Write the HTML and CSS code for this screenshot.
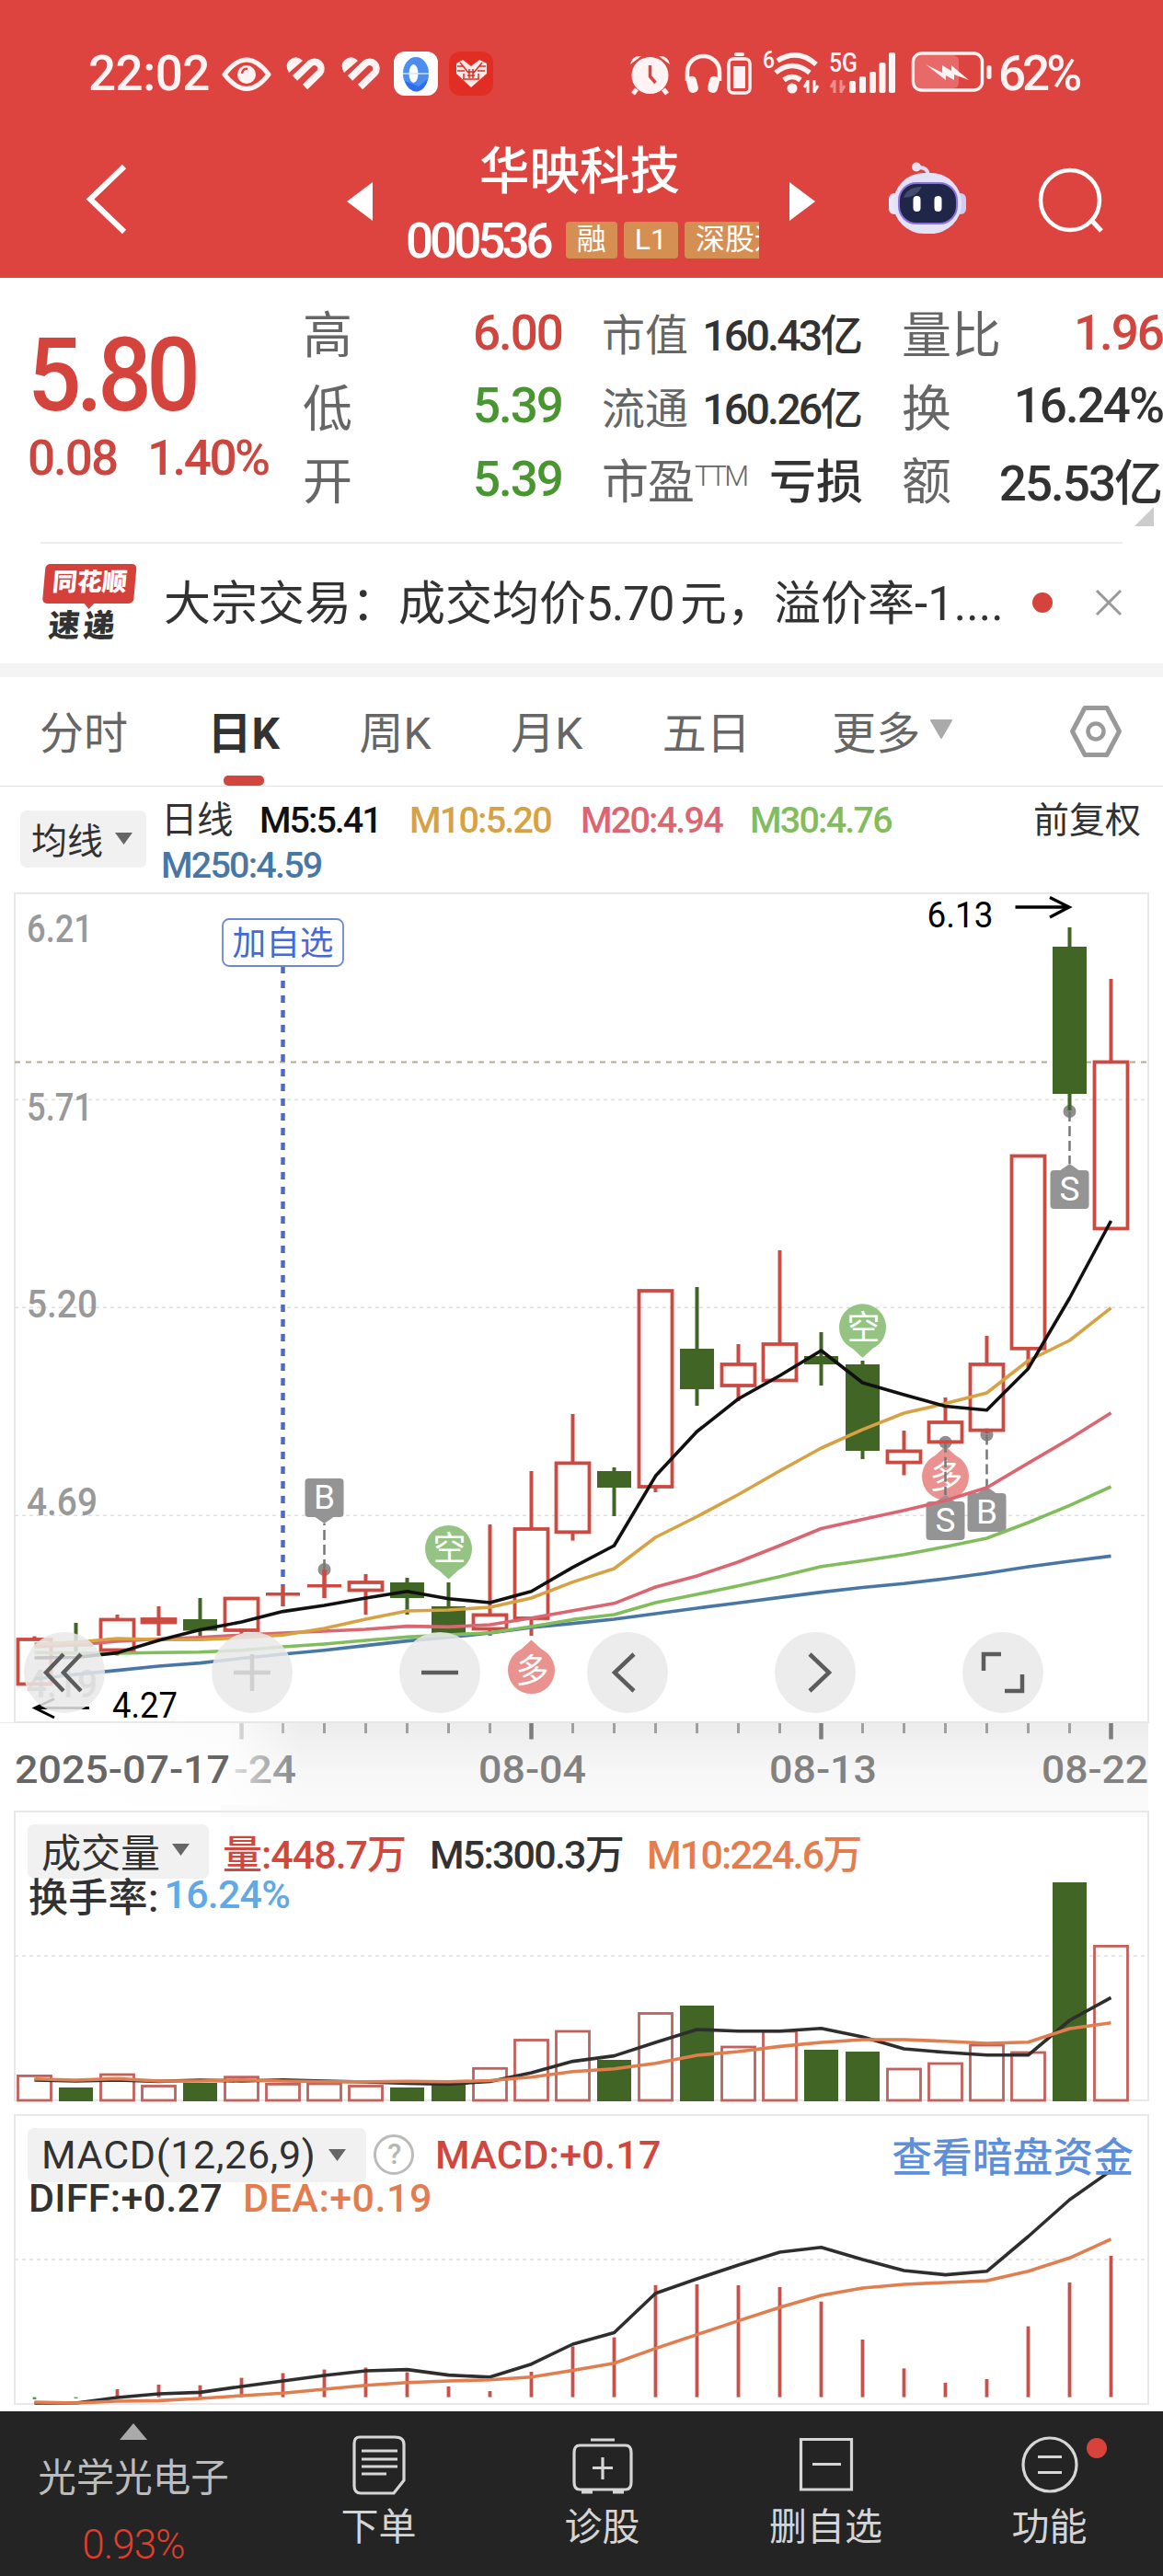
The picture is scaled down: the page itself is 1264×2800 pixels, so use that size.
FILE: index.html
```html
<!DOCTYPE html>
<html lang="zh-CN">
<head>
  <meta charset="UTF-8" />
  <meta name="viewport" content="width=device-width, initial-scale=1.0"/>
  <title>华映科技 000536</title>
  <link rel="stylesheet" href="styles.css">
</head>
<body>
  <header>
    <div class="status-bar">
      <span class="clock">22:02</span>
      <svg class="status-left" width="296" height="52" viewBox="241 54 296 52">
        <path d="M244 81 Q268 49 292 81 Q268 112 244 81Z" fill="none" stroke="#fff3f3" stroke-width="5" stroke-linejoin="round"/>
        <circle cx="268" cy="81" r="10" fill="#fff3f3"/>
        <path d="M263 80 q1 -6 6 -5" fill="none" stroke="#dd4440" stroke-width="2.5"/>
        <g id="heart">
          <path d="M314 79 Q309 70 314.500 65.500 Q322 59 329 66 Z" fill="#fff3f3"/>
          <path d="M320.500 85 L337 69 A7.300 7.300 0 0 1 347.500 79 L331.500 94.500" fill="none" stroke="#fff3f3" stroke-width="7.500"/>
        </g>
        <use href="#heart" x="60"/>
        <rect x="428" y="56" width="48" height="48" rx="12" fill="#fff"/>
        <ellipse cx="452" cy="80" rx="14" ry="18" fill="#4b8df0"/>
        <path d="M440 88 a13 17 0 0 0 25 -2 l-10 8z" fill="#2f6cf0"/>
        <ellipse cx="449.500" cy="80" rx="5" ry="10" fill="#fff"/>
        <path d="M438 80h28" stroke="#d4e4fb" stroke-width="1.500"/>
        <rect x="488" y="56" width="48" height="48" rx="12" fill="#e02e24"/>
        <path d="M512 95 L496 80 V69 L503 65 L512 72 L521 65 L529 69 V80Z" fill="#ffe9e7"/>
        <path d="M500 68l10 12M524 68l-10 12M497 77h8M519 77h8M503 86l18 0M508 78h8M508 82h8M510 75v10M514 75v10M504 80v6M520 80v6M497 72h7M521 72h7" stroke="#e02e24" stroke-width="1.500"/>
      </svg>
      <svg class="status-right" width="396" height="52" viewBox="684 54 396 52">
        <g fill="#fff3f3">
          <circle cx="706.500" cy="82" r="20"/>
          <path d="M685 70q2 -10 12 -9zM728 70q-2 -10 -12 -9z"/>
          <path d="M692 97l-4 5M721 97l4 5" stroke="#fff3f3" stroke-width="5"/>
          <path d="M706.500 71v12l6 7" fill="none" stroke="#dd4440" stroke-width="3.500"/>
          <path d="M747 88v-10a17.500 17 0 0 1 35 0v10" fill="none" stroke="#fff3f3" stroke-width="4.500"/>
          <rect x="747" y="83" width="11" height="18" rx="5" transform="rotate(-14 752 92)"/>
          <rect x="770" y="83" width="11" height="18" rx="5" transform="rotate(14 776 92)"/>
          <rect x="798" y="57" width="11" height="4" rx="2"/>
          <rect x="792" y="64" width="23" height="37" rx="5" fill="none" stroke="#fff3f3" stroke-width="3.500"/>
          <rect x="797" y="72" width="13" height="24"/>
          <text x="829" y="74" font-size="25" font-weight="500" textLength="13" lengthAdjust="spacingAndGlyphs">6</text>
          <g fill="none" stroke="#fff3f3" stroke-width="5.500">
            <path d="M845 66Q867 52 887 70M843 79Q861 64 880 79M852 87Q861 80 870 87"/>
          </g>
          <circle cx="861" cy="96" r="5.500"/>
          <path d="M878 87v14M885 87v14M878 88l-4 7M885 100l4 -7" stroke="#fff3f3" stroke-width="3"/>
          <text x="901" y="78" font-size="29" font-weight="500" textLength="31" lengthAdjust="spacingAndGlyphs">5G</text>
          <path d="M907 87v14M914 87v14M907 88l-4 7M914 100l4 -7" stroke="#ee8f8d" stroke-width="3"/>
          <rect x="923" y="88" width="7" height="13" rx="2"/>
          <rect x="934" y="83" width="7" height="18" rx="2"/>
          <rect x="945" y="78" width="7" height="23" rx="2"/>
          <rect x="955.500" y="68" width="7" height="33" rx="2"/>
          <rect x="966" y="57" width="7" height="44" rx="2"/>
          <rect x="995" y="60" width="47" height="36" rx="6" fill="#e76a68"/>
          <rect x="992.500" y="58" width="75" height="40" rx="9" fill="none" stroke="#fff3f3" stroke-width="3.500"/>
          <rect x="1072.500" y="71" width="5" height="15" rx="2.500"/>
          <path d="M1006 70l18 9v-8l10 6v-6l19 16l-16 -6v6l-9 -5v5z"/>
        </g>
      </svg>
      <span class="battery-text">62%</span>
    </div>

    <div class="nav-bar">
      <svg class="nav-back" width="50" height="84" viewBox="92 174 50 84"><path d="M135 181L98 216.500L135 252" fill="none" stroke="#fff" stroke-width="6"/></svg>
      <svg class="nav-prev" width="28" height="42"><path d="M28 0V42L0 21z" fill="#fff"/></svg>
      <div class="stock-title">
        <h1>华映科技</h1>
        <div class="stock-code">
          <span class="code">000536</span>
          <span class="tag">融</span>
          <span class="tag">L1</span>
          <span class="tag tag-cut">深股通</span>
        </div>
      </div>
      <svg class="nav-next" width="28" height="42"><path d="M0 0V42L28 21z" fill="#fff"/></svg>
      <svg class="robot" width="88" height="80" viewBox="965 176 88 80">
        <path d="M1010 190q-1 -8 -10 -8" fill="none" stroke="#dddcf5" stroke-width="4"/>
        <circle cx="997" cy="181.500" r="5" fill="#e4e2f7"/>
        <rect x="967" y="210" width="12" height="23" rx="6" fill="#e8e6f8"/>
        <rect x="1039" y="210" width="12" height="23" rx="6" fill="#cfcdf0"/>
        <rect x="972" y="188" width="74" height="66" rx="33" fill="#e3e2f6"/>
        <rect x="978" y="199" width="63" height="44" rx="19" fill="#1f2647" stroke="#8a6fe0" stroke-width="2"/>
        <path d="M983 215q4 -12 20 -12q-5 11 -20 12z" fill="#454c6b"/>
        <rect x="993.500" y="213" width="8" height="17" rx="4" fill="#fff"/>
        <rect x="1016.500" y="213" width="8" height="17" rx="4" fill="#fff"/>
      </svg>
      <svg class="search" width="74" height="74" viewBox="1128 182 74 74"><ellipse cx="1164" cy="217.500" rx="32" ry="32.500" fill="none" stroke="#fff" stroke-width="4.500"/><path d="M1186 238L1198 251" stroke="#fff" stroke-width="5"/></svg>
    </div>
  </header>

  <section class="quote">
    <div class="price-box">
      <div class="price">5.80</div>
      <div class="change"><span>0.08</span><span>1.40%</span></div>
    </div>
    <div class="quote-col col-a">
      <div><label>高</label><b class="red">6.00</b></div>
      <div><label>低</label><b class="green">5.39</b></div>
      <div><label>开</label><b class="green">5.39</b></div>
    </div>
    <div class="quote-col col-b">
      <div><label>市值</label><b>160.43<i>亿</i></b></div>
      <div><label>流通</label><b>160.26<i>亿</i></b></div>
      <div class="pe"><label>市盈<sup>TTM</sup></label><b>亏损</b></div>
    </div>
    <div class="quote-col col-c">
      <div><label>量比</label><b class="red">1.96</b></div>
      <div><label>换</label><b>16.24%</b></div>
      <div><label>额</label><b>25.53<i>亿</i></b></div>
    </div>
    <svg class="corner" width="21" height="21"><path d="M21 0V21H0z" fill="#ccc"/></svg>
  </section>

  <section class="news">
    <div class="news-logo">
      <span class="logo-top">同花顺</span>
      <span class="logo-bottom">速递</span>
    </div>
    <p>大宗交易：成交均价<span class="n1">5.70</span>元，溢价率<span class="n2">-1....</span></p>
    <span class="news-dot"></span>
    <svg class="close" width="30" height="30"><path d="M2 2L28 28M28 2L2 28" stroke="#999" stroke-width="3"/></svg>
  </section>

  <nav class="tabs">
    <span class="tab">分时</span>
    <span class="tab active">日K</span>
    <span class="tab">周K</span>
    <span class="tab">月K</span>
    <span class="tab">五日</span>
    <span class="tab more">更多<svg width="26" height="22"><path d="M2 1H24L13 20z" fill="#aaa" stroke="#aaa" stroke-width="2" stroke-linejoin="round"/></svg></span>
    <svg class="gear" width="58" height="58" viewBox="0 0 58 58"><path d="M17 3.500H41L54.500 29L41 54.500H17L3.500 29z" fill="none" stroke="#999" stroke-width="5" stroke-linejoin="round"/><circle cx="29" cy="29" r="8.500" fill="none" stroke="#999" stroke-width="4.500"/></svg>
  </nav>

  <section class="ma-legend">
    <div class="chip">均线<svg width="21" height="15"><path d="M1 1H20L10.500 14z" fill="#666"/></svg></div>
    <div class="ma-values">
      <div class="ma-row">
        <span class="w-day">日线</span><span class="w-m5">M5:5.41</span><span class="w-m10">M10:5.20</span><span class="w-m20">M20:4.94</span><span class="w-m30">M30:4.76</span>
      </div>
      <div class="ma-row"><span class="w-m250">M250:4.59</span></div>
    </div>
    <div class="adjust">前复权</div>
  </section>

  <section class="panel price-panel">
    <svg id="price-chart" width="1264" height="1001" viewBox="0 961 1264 1001"></svg>
    <div class="chart-tools">
      <button><svg viewBox="0 0 88 88"><path d="M43 24L24 44L43 64M62 24L43 44L62 64"/></svg></button>
      <button class="off"><svg viewBox="0 0 88 88"><path d="M24 44H64M44 24V64"/></svg></button>
      <button><svg viewBox="0 0 88 88"><path d="M24 44H64"/></svg></button>
      <button><svg viewBox="0 0 88 88"><path d="M51 24L30 44L51 64"/></svg></button>
      <button><svg viewBox="0 0 88 88"><path d="M38 24L59 44L38 64"/></svg></button>
      <button><svg viewBox="0 0 88 88"><path d="M23 42V24H42M46 64H65V46"/></svg></button>
    </div>
  </section>

  <section class="panel vol-panel">
    <svg id="vol-chart" width="1264" height="330" viewBox="0 1962 1264 330"></svg>
    <div class="panel-head">
      <div class="head-row">
        <div class="chip chip-vol">成交量<svg width="21" height="15"><path d="M1 1H20L10.500 14z" fill="#666"/></svg></div>
        <span class="v-now">量:448.7万</span><span class="v-m5">M5:300.3万</span><span class="v-m10">M10:224.6万</span>
      </div>
      <div class="head-row second"><span class="v-turn">换手率:</span><span class="v-rate">16.24%</span></div>
    </div>
  </section>

  <section class="panel macd-panel">
    <svg id="macd-chart" width="1264" height="329" viewBox="0 2292 1264 329"></svg>
    <div class="panel-head">
      <div class="head-row">
        <div class="chip chip-macd"><span>MACD(12,26,9)</span><svg width="21" height="15"><path d="M1 1H20L10.500 14z" fill="#666"/></svg></div>
        <span class="help">?</span>
        <span class="m-now">MACD:+0.17</span>
        <a class="dark-pool">查看暗盘资金</a>
      </div>
      <div class="head-row second"><span class="m-diff">DIFF:+0.27</span><span class="m-dea">DEA:+0.19</span></div>
    </div>
  </section>

  <footer>
    <div class="sector">
      <svg width="30" height="18"><path d="M15 0L30 18H0z" fill="#aaa"/></svg>
      <span class="sector-name">光学光电子</span>
      <span class="sector-rate">0.93%</span>
    </div>
    <div class="foot-item">
      <svg width="68" height="68" viewBox="0 0 68 68"><path d="M13 3H51Q61 3 61 11V50L50 64H14Q7 64 7 56V10Q7 3 13 3z"/><path d="M15 18H54M15 27H54M15 35H54M15 43H42"/></svg>
      <span>下单</span>
    </div>
    <div class="foot-item">
      <svg width="68" height="68" viewBox="0 0 68 68"><path d="M21 6H47M9 12H59Q65 12 65 20V52Q65 60 59 60H9Q3 60 3 52V20Q3 12 9 12zM34 25V49M23 36.500H45M11 63H23M45 63H57"/></svg>
      <span>诊股</span>
    </div>
    <div class="foot-item">
      <svg width="68" height="68" viewBox="0 0 68 68"><path d="M6.500 5.500H61.500V60H6.500zM19 32.500H50"/></svg>
      <span>删自选</span>
    </div>
    <div class="foot-item">
      <svg width="68" height="68" viewBox="0 0 68 68"><circle cx="34" cy="33" r="29"/><path d="M21 24.500H47M21 41.500H47"/></svg>
      <span>功能</span>
      <i class="foot-dot"></i>
    </div>
  </footer>

  <script src="chart.js"></script>
</body>
</html>
```

FILE: styles.css
```css
* {
  box-sizing: border-box;
  margin: 0;
  padding: 0;
}

body {
  width: 1264px;
  background-color: #fff;
  color: #323232;
  font-family: Roboto, 'Noto Sans CJK SC', sans-serif;
  overflow-x: hidden;
}

svg {
  display: block;
  flex-shrink: 0;
  overflow: visible;
}

span, label, b, a {
  white-space: nowrap;
}

i {
  font-style: normal;
}

.red { color: #d0453e; }
.green { color: #47962f; }

/* header */
header {
  height: 302px;
  background: #dd4440;
  color: #fff;
  padding-top: 53px;
}

.status-bar {
  display: flex;
  align-items: center;
  height: 54px;
  padding-left: 96px;
  color: #fff3f3;
}

.clock, .battery-text {
  font-size: 53px;
  font-weight: 500;
  line-height: 54px;
}

.clock {
  width: 145px;
  letter-spacing: -0.5px;
}

.status-right {
  margin-left: 147px;
}

.battery-text {
  margin-left: 5px;
  letter-spacing: -4px;
}

.nav-bar {
  display: flex;
  align-items: flex-start;
  height: 195px;
  padding: 40px 0 0 92px;
}

.nav-back {
  margin-top: 27px;
}

.nav-prev {
  margin: 51px 0 0 235px;
}

.stock-title {
  width: 384px;
  margin: 0 33px 0 36px;
}

.stock-title h1 {
  margin-top: 3px;
  font-size: 54.5px;
  font-weight: 500;
  line-height: 72px;
  text-align: center;
  padding-right: 6px;
}

.stock-code {
  display: flex;
  gap: 7px;
  height: 40px;
  margin-top: 19px;
}

.code {
  width: 168px;
  font-size: 53px;
  font-weight: 500;
  line-height: 42px;
  letter-spacing: -4px;
}

.tag {
  flex-shrink: 0;
  height: 40px;
  padding: 0 12px;
  border-radius: 4px;
  background: #d58f53;
  font-size: 32px;
  line-height: 38px;
}

.tag-cut {
  width: 81px;
  padding-right: 0;
  border-radius: 4px 0 0 4px;
  overflow: hidden;
}

.nav-next {
  margin-top: 51px;
}

.robot {
  margin: 29px 0 0 78px;
}

.search {
  margin: 35px 0 0 75px;
}

/* quote */
.quote {
  display: flex;
  position: relative;
  height: 287px;
  padding-top: 19px;
}

.price-box {
  width: 329px;
  padding-left: 30px;
  color: #d5443c;
}

.price {
  margin-top: 37px;
  font-size: 111px;
  font-weight: 500;
  line-height: 100px;
  letter-spacing: -6px;
  transform: scaleX(0.93);
  transform-origin: 0 50%;
}

.change {
  display: flex;
  margin-top: 10px;
  font-size: 53px;
  line-height: 60px;
  letter-spacing: -2px;
  color: #cc463f;
  font-weight: 500;
}

.change span:first-child {
  width: 130px;
}

.change span:last-child {
  letter-spacing: -2.5px;
}

.quote-col div {
  display: flex;
  justify-content: space-between;
  align-items: center;
  height: 79.5px;
}

.quote-col label {
  color: #666;
  font-size: 54px;
}

.quote-col b {
  padding-top: 2px;
  font-size: 53px;
  font-weight: 500;
  letter-spacing: -2px;
}

.quote-col i {
  letter-spacing: 0;
}

.col-a { width: 282px; }

.col-b {
  width: 284px;
  margin-left: 43px;
}

.col-b label { font-size: 47px; }

.col-b b {
  padding-top: 0;
  font-size: 46.5px;
  letter-spacing: -2.8px;
}

.col-b .pe label { font-size: 51px; letter-spacing: -1px; }
.col-b .pe b { font-size: 51px; letter-spacing: 0; }

.pe sup {
  display: inline-block;
  font-size: 31px;
  font-weight: 300;
  line-height: 33px;
  vertical-align: 14px;
  letter-spacing: -2.5px;
  margin-left: 1px;
}

.col-c {
  width: 284px;
  margin-left: 42px;
}

.corner {
  position: absolute;
  right: 10px;
  top: 249px;
}

/* news */
.news {
  display: flex;
  align-items: center;
  height: 147px;
  border-bottom: 15px solid #f4f4f4;
  padding-left: 44px;
  background: linear-gradient(#ececec, #ececec) 44px 0 / 1176px 2px no-repeat;
}

.news-logo {
  display: flex;
  flex-direction: column;
  width: 134px;
  height: 84px;
  transform: skewX(-5deg);
}

.logo-top {
  width: 99px;
  height: 43px;
  margin-left: 2px;
  border-radius: 5px;
  background: #d5403b;
  color: #fff;
  font-size: 27px;
  font-weight: 900;
  line-height: 41px;
  text-align: center;
}

.logo-top::after {
  content: '';
  display: block;
  width: 14px;
  height: 8px;
  margin-left: 44px;
  background: #d5403b;
  clip-path: polygon(0 0, 100% 0, 50% 100%);
}

.logo-bottom {
  width: 99px;
  margin-top: 5px;
  padding-left: 11px;
  font-size: 34px;
  font-weight: 900;
  line-height: 38px;
  letter-spacing: 4px;
}

.news p {
  width: 944px;
  padding-top: 3px;
  font-size: 51px;
  line-height: 60px;
  white-space: nowrap;
}

.n1 {
  display: inline-block;
  width: 102px;
  letter-spacing: -1px;
}

.news-dot {
  width: 22px;
  height: 22px;
  border-radius: 50%;
  background: #d5443c;
}

.close {
  margin-left: 46px;
}

/* tabs */
.tabs {
  display: flex;
  align-items: center;
  height: 119px;
  padding-left: 43px;
  border-bottom: 1px solid #e2e2e2;
}

.tab {
  display: flex;
  position: relative;
  align-items: center;
  height: 118px;
  margin-right: 86.5px;
  padding-bottom: 4px;
  color: #666;
  font-size: 48px;
}

.tab.active {
  color: #323232;
  font-weight: 700;
}

.tab.active::after {
  content: '';
  position: absolute;
  left: 17px;
  bottom: 0;
  width: 44px;
  height: 11px;
  border-radius: 5px;
  background: #d0453c;
}

.tab.more {
  margin-left: 2px;
}

.tab svg {
  margin-left: 10px;
}

.gear {
  margin-left: 39px;
}

/* moving average legend */
.chip {
  display: flex;
  align-items: center;
  background: #f1f1f1;
  border-radius: 7px;
}

.ma-legend {
  display: flex;
  height: 106px;
  padding-left: 22px;
}

.ma-legend .chip {
  width: 137px;
  height: 62px;
  margin-top: 26px;
  padding: 0 0 2px 12px;
  font-size: 39px;
}

.chip svg {
  margin-left: 12px;
}

.ma-values {
  width: 964px;
  padding: 12px 0 0 16px;
}

.ma-row {
  display: flex;
  height: 49px;
  font-size: 39.5px;
  font-weight: 500;
  line-height: 50px;
  letter-spacing: -1.8px;
}

.w-day { width: 107px; letter-spacing: -0.5px; font-weight: 400; }
.w-m5 { width: 163px; color: #111; letter-spacing: -2px; }
.w-m10 { width: 186px; color: #d6a243; }
.w-m20 { width: 184px; color: #db6671; }
.w-m30 { color: #81bd5c; }
.w-m250 { color: #4877a5; }

.adjust {
  padding-top: 12px;
  font-size: 39px;
  line-height: 50px;
}

/* chart panels */
.panel {
  position: relative;
}

.price-panel { height: 1001px; }
.vol-panel { height: 330px; }
.macd-panel { height: 329px; }

.chart-tools {
  display: flex;
  gap: 116px;
  position: absolute;
  left: 26px;
  top: 813px;
}

.chart-tools button {
  width: 88px;
  height: 88px;
  border: none;
  border-radius: 50%;
  background: rgba(233, 233, 233, 0.85);
}

.chart-tools path {
  fill: none;
  stroke: #5c5c5c;
  stroke-width: 4.5;
}

.chart-tools .off path {
  stroke: #d0d0d0;
}

.panel-head {
  position: absolute;
  left: 30px;
  right: 32px;
  top: 21px;
  font-size: 43px;
  font-weight: 500;
}

.head-row {
  display: flex;
  align-items: center;
  height: 59px;
  padding-bottom: 2px;
  letter-spacing: -1.8px;
}

.head-row.second {
  height: 44px;
  margin-top: -4px;
  padding-left: 1px;
}

.head-row .chip {
  height: 59px;
  margin-top: 2px;
  padding: 0 0 4px 15px;
  font-weight: 400;
  letter-spacing: 0;
}

.chip-vol { width: 197px; }
.chip-macd { width: 368px; }

.head-row .chip-macd {
  padding-bottom: 1px;
  letter-spacing: 0.7px;
}

.v-now { width: 225px; margin-left: 15px; color: #cf483f; letter-spacing: -1px; }
.v-m5 { width: 236px; }
.v-m10 { color: #e47c4d; }
.v-turn { letter-spacing: 0.3px; }
.v-rate { margin-left: 6px; color: #62a8e5; letter-spacing: -0.8px; }

.help {
  width: 44px;
  height: 44px;
  margin: 0 23px 0 8px;
  border: 3px solid #bbb;
  border-radius: 50%;
  color: #b5b5b5;
  font-size: 31px;
  line-height: 38px;
  text-align: center;
}

.m-now { color: #cf483f; letter-spacing: 0.3px; }
.m-diff { width: 233px; letter-spacing: 0.3px; }
.m-dea { color: #e47c4d; letter-spacing: 0.5px; }

.dark-pool {
  margin-left: auto;
  color: #5e8fdb;
  font-size: 43.8px;
  letter-spacing: 0;
}

#price-chart, #vol-chart, #macd-chart {
  font-family: Roboto, 'Noto Sans CJK SC', sans-serif;
}

/* footer */
footer {
  display: flex;
  height: 179px;
  background: #242424;
  color: #d4d4d4;
}

.sector {
  display: flex;
  flex-direction: column;
  align-items: center;
  width: 290px;
  padding-top: 13px;
  font-size: 41.5px;
}

.sector-name {
  margin-top: 17px;
  line-height: 50px;
  color: #bcbcbc;
}

.sector-rate {
  margin-top: 22px;
  font-size: 44px;
  line-height: 50px;
  letter-spacing: -1px;
  font-weight: 300;
  color: #e23d2c;
}

.foot-item {
  display: flex;
  position: relative;
  flex-direction: column;
  align-items: center;
  width: 243px;
  padding-top: 25px;
  font-size: 41px;
}

.foot-item span {
  margin-top: 8px;
  line-height: 50px;
}

.foot-item path, .foot-item circle {
  fill: none;
  stroke: #d6d6d6;
  stroke-width: 3.2;
}

.foot-dot {
  position: absolute;
  left: 162px;
  top: 29px;
  width: 22px;
  height: 22px;
  border-radius: 50%;
  background: #d8423a;
}
```

FILE: chart.js
```javascript
const RED = '#cb4b43';
const GREEN = '#406524';
const STEP = 45;
const cx = i => 37.5 + i * STEP;

// [up, high, bodyTop, bodyBottom, low]
const candles = [
  [1, 1778.5, 1782, 1830.5, 1831], [0, 1764, 1787, 1789.5, 1795], [1, 1755, 1760.5, 1793.5, 1799.5],
  [1, 1746, 1760, 1763.5, 1778], [0, 1737, 1760, 1772.5, 1778], [1, 1737.5, 1737.5, 1772, 1777],
  [2, 1724, 1732.7, 1732.7, 1746], [2, 1706, 1723.8, 1723.8, 1737], [1, 1711, 1720, 1728.5, 1755],
  [0, 1715, 1720, 1737, 1755], [0, 1720, 1746, 1775.5, 1775.5], [1, 1657, 1755.4, 1770.5, 1778],
  [1, 1599, 1662, 1759, 1778], [1, 1537, 1590.4, 1665.3, 1674.6], [0, 1595, 1599, 1617, 1648],
  [1, 1403, 1403, 1616, 1622], [0, 1399, 1466, 1510, 1528], [1, 1461, 1483, 1506, 1523],
  [1, 1359, 1461, 1500.5, 1501], [0, 1448, 1474, 1483, 1506], [0, 1479, 1483, 1577, 1586],
  [1, 1555, 1577.4, 1589.6, 1603.5], [1, 1519, 1546, 1567.3, 1568], [1, 1452, 1483, 1554.6, 1558],
  [1, 1256.5, 1256.5, 1465.8, 1487], [0, 1008, 1029, 1189, 1207], [1, 1064, 1154.4, 1335.4, 1336]
];

const ma = {
  m250: [1825, 1820, 1815.6, 1811, 1807.6, 1802.5, 1798, 1793.7, 1788.6, 1783.6, 1779.8, 1775, 1769, 1764.6, 1760, 1754, 1748, 1742.3, 1736.4, 1730.6, 1725.5, 1721.3, 1716, 1710, 1703, 1697, 1691.4],
  m30: [1796, 1797, 1797, 1796.2, 1795.8, 1793.7, 1790, 1787, 1783, 1779.4, 1777, 1774.7, 1768, 1760.4, 1755, 1742, 1733, 1723.8, 1713.7, 1702.8, 1696.5, 1689.7, 1681.3, 1672, 1655, 1636.3, 1616],
  m20: [1790, 1788, 1784, 1781.5, 1779.8, 1777.3, 1775, 1773, 1771, 1767.6, 1768.4, 1766, 1758.8, 1750.8, 1742.8, 1725, 1713, 1697.7, 1680, 1661.5, 1651.4, 1641.8, 1631, 1617, 1590.4, 1564, 1535.7],
  m10: [1787, 1785, 1781, 1782.3, 1782.3, 1780, 1777.3, 1770, 1760, 1751, 1750, 1747, 1737, 1719.6, 1705, 1671, 1648.5, 1624.5, 1598.8, 1574, 1553.8, 1536, 1525.6, 1514, 1479, 1457, 1421.6],
  m5: [1802, 1801.5, 1796.6, 1783, 1771.4, 1763, 1751.6, 1745, 1737, 1729.7, 1737.7, 1742, 1729.7, 1703.6, 1680, 1604.3, 1556, 1520.5, 1495.3, 1468, 1503, 1516, 1528.5, 1532.7, 1487.7, 1411, 1327]
};
const maColors = { m250: '#4877a5', m30: '#81bd5c', m20: '#db6671', m10: '#d6a243', m5: '#111' };

const volumes = [2256.4, 2269, 2255, 2267.5, 2264, 2257.7, 2265.4, 2265, 2267.5, 2269, 2265, 2248.3, 2217.5, 2208, 2239, 2188.5, 2180, 2225, 2208, 2228, 2230, 2249, 2243, 2223, 2231, 2046, 2115.4];
const vol5 = [2261, 2262, 2261, 2262.4, 2261, 2262, 2260.7, 2262, 2263, 2264.5, 2265.4, 2262.4, 2253, 2240.6, 2234.6, 2220, 2206, 2207.7, 2207.7, 2204.7, 2214, 2227, 2230.8, 2233.8, 2233.8, 2196, 2171.4];
const vol10 = [2259.8, 2261, 2259.4, 2262, 2262, 2260.7, 2262, 2262.8, 2262.8, 2262.4, 2262.8, 2261.5, 2257.7, 2251.7, 2248.7, 2242.7, 2234, 2230, 2224.4, 2220, 2217, 2217, 2218.8, 2221, 2219.7, 2205, 2198.7];

const macd = [2608, 2607, 2597, 2592, 2592.7, 2584.6, 2579.5, 2575.6, 2573.5, 2578.6, 2594, 2599, 2578, 2550.4, 2540.6, 2483.8, 2483, 2484, 2486, 2501.7, 2543, 2574.4, 2590, 2586, 2528.6, 2481, 2452];
const diff = [2612, 2612, 2606, 2602, 2600.4, 2594, 2588, 2582, 2577, 2575.6, 2581.6, 2583.8, 2569.7, 2548, 2535.5, 2492.7, 2477, 2462, 2448, 2442.7, 2456, 2468, 2472.6, 2468.8, 2431, 2391, 2359.4];
const dea = [2611, 2612, 2610, 2609.4, 2607, 2604, 2601.3, 2597, 2592.7, 2589.7, 2588, 2586.8, 2583.8, 2576.5, 2568.8, 2552.6, 2537.6, 2522.6, 2508, 2495, 2487, 2483, 2481, 2479, 2468.8, 2454.3, 2433.8];

function line(x1, y1, x2, y2, color, width, dash) {
  return `<line x1="${x1}" y1="${y1}" x2="${x2}" y2="${y2}" stroke="${color}" stroke-width="${width}"${dash ? ` stroke-dasharray="${dash}"` : ''}/>`;
}

function curve(ys, color, width = 3.6) {
  const pts = ys.map((y, i) => `${cx(i)},${y}`).join(' ');
  return `<polyline points="${pts}" fill="none" stroke="${color}" stroke-width="${width}" stroke-linejoin="round"/>`;
}

function label(x, y, str, size, len, color, weight = 400) {
  return `<text x="${x}" y="${y}" font-size="${size}" font-weight="${weight}" fill="${color}" textLength="${len}" lengthAdjust="spacingAndGlyphs">${str}</text>`;
}

function frame(top, bottom) {
  return `<rect x="16" y="${top}" width="1232" height="${bottom - top}" fill="none" stroke="#e8e8e8" stroke-width="2"/>`;
}

function grid(y) {
  return line(16, y, 1248, y, '#e0e0e0', 1.5, '4 4');
}

// buy / sell flag: gray square, pointer towards the candle and a dashed stem to the dot
function flag(i, letter, top, dot) {
  const x = cx(i);
  const below = top > dot;
  const edge = below ? top : top + 42;
  const tip = below ? top - 7 : top + 49;
  return `<circle cx="${x}" cy="${dot}" r="7" fill="#8f8f8f"/>` +
    line(x, dot, x, tip, '#777', 2.5, '11 5') +
    `<path d="M${x - 10} ${edge}L${x} ${tip}L${x + 10} ${edge}z" fill="#949494"/>` +
    `<rect x="${x - 21}" y="${top}" width="42" height="42" rx="4" fill="#949494"/>` +
    `<text x="${x}" y="${top + 33}" font-size="37" text-anchor="middle" fill="#fff">${letter}</text>`;
}

function bubble(i, char, y, color, dir) {
  const x = cx(i);
  return `<g opacity="0.95"><circle cx="${x}" cy="${y}" r="25.5" fill="${color}"/>` +
    `<path d="M${x - 12} ${y + dir * 22}L${x} ${y + dir * 33}L${x + 12} ${y + dir * 22}z" fill="${color}"/></g>` +
    `<text x="${x + 1}" y="${y + 13}" font-size="36" text-anchor="middle" fill="#fff">${char}</text>`;
}

function drawPrice() {
  let s = `<defs>
    <linearGradient id="shade" x1="0" y1="0" x2="0" y2="1"><stop offset="0" stop-color="#ececec"/><stop offset="0.6" stop-color="#f7f7f7"/><stop offset="1" stop-color="#fafafa"/></linearGradient>
    <linearGradient id="fade" x1="0" y1="0" x2="1" y2="0"><stop offset="0.1" stop-color="#fff"/><stop offset="0.75" stop-color="#fff" stop-opacity="0.8"/><stop offset="1" stop-color="#fff" stop-opacity="0"/></linearGradient>
  </defs>`;
  s += '<rect x="0" y="1872" width="1248" height="90" fill="url(#shade)"/>';
  for (let i = 5; i < 27; i++) {
    const big = [5, 12, 19, 26].includes(i);
    s += line(cx(i), 1872, cx(i), big ? 1890.5 : 1884, big ? '#7d7d7d' : '#a0a0a0', big ? 4.5 : 3);
  }
  s += label(254, 1937.5, '-24', 43, 68, '#7d7d7d', 500);
  s += '<rect x="0" y="1873" width="330" height="89" fill="url(#fade)"/>';
  s += label(16, 1937.5, '2025-07-17', 43, 234, '#666', 500);
  s += label(520, 1937.5, '08-04', 43, 117, '#828282', 500);
  s += label(836, 1937.5, '08-13', 43, 117, '#828282', 500);
  s += label(1132, 1937.5, '08-22', 43, 116, '#828282', 500);

  s += frame(971, 1872) + grid(1195.3) + grid(1421.2) + grid(1647.2);
  s += line(16, 1154.4, 1246, 1154.4, '#b5ab8c', 2, '6 6');
  [['6.21', 1023.5, 72], ['5.71', 1217.5, 72], ['5.20', 1431.7, 77], ['4.69', 1646.8, 77], ['4.19', 1844.6, 77]].forEach(a => {
    s += label(29, a[1], a[0], 43, a[2], '#999', 500);
  });

  s += line(307.5, 1050, 307.5, 1724, '#4a69d8', 4.5, '8 8');
  s += '<rect x="242" y="999" width="131" height="51" rx="7" fill="#fff" stroke="#6c88d0" stroke-width="1.8"/>';
  s += label(252.5, 1038, '加自选', 36.5, 110, '#4a69d0');

  s += bubble(10, '空', 1683.4, '#8fc07d', 1) + bubble(20, '空', 1442.7, '#8fc07d', 1);
  s += bubble(12, '多', 1815.6, '#e88d8a', -1) + bubble(22, '多', 1605, '#e88d8a', -1);
  s += flag(7, 'B', 1607, 1706) + flag(22, 'S', 1632, 1567.7) + flag(23, 'B', 1623, 1559.5) + flag(25, 'S', 1272, 1208);

  candles.forEach(([up, high, top, bottom, low], i) => {
    const x = cx(i);
    const color = up ? RED : GREEN;
    s += line(x, high, x, top, color, 4) + line(x, bottom, x, low, color, 4);
    if (up === 2) s += line(x - 18.5, top, x + 18.5, top, RED, 3.5) + line(x, high, x, low, RED, 4);
    else if (up) s += `<rect x="${x - 18}" y="${top}" width="36" height="${bottom - top}" fill="none" stroke="${RED}" stroke-width="3.8"/>`;
    else s += `<rect x="${x - 18.5}" y="${top}" width="37" height="${bottom - top}" fill="${GREEN}"/>`;
  });
  Object.keys(ma).forEach(k => { s += curve(ma[k], maColors[k]); });

  s += label(1007.5, 1008, '6.13', 38.5, 72, '#000');
  s += '<path d="M1103.5 986H1162M1141 975.5L1162 986L1141 997" fill="none" stroke="#000" stroke-width="3.3"/>';
  s += label(122, 1867, '4.27', 38, 71, '#000');
  s += '<path d="M97 1856.5H38M59 1846.5L38 1856.5L59 1867" fill="none" stroke="#000" stroke-width="3"/>';
  document.getElementById('price-chart').innerHTML = s;
}

function drawVolume() {
  let s = '<rect x="240" y="1962" width="1008" height="13" fill="#fafafa"/>' + frame(1969, 2283) + grid(2126);
  volumes.forEach((y, i) => {
    const x = cx(i);
    if (candles[i][0]) s += `<rect x="${x - 18}" y="${y}" width="36" height="${2283 - y}" fill="none" stroke="#c2615c" stroke-width="2.8"/>`;
    else s += `<rect x="${x - 18.5}" y="${y}" width="37" height="${2284 - y}" fill="${GREEN}"/>`;
  });
  s += curve(vol5, '#2e2e2e') + curve(vol10, '#e07e50');
  document.getElementById('vol-chart').innerHTML = s;
}

function drawMacd() {
  let s = frame(2299, 2613) + grid(2456);
  macd.forEach((y, i) => { s += line(cx(i), y, cx(i), 2605.6, i < 2 ? '#5f9a4a' : '#c6524b', 3.8); });
  s += curve(diff, '#2e2e2e') + curve(dea, '#e07e50');
  document.getElementById('macd-chart').innerHTML = s;
}

drawPrice();
drawVolume();
drawMacd();
```
